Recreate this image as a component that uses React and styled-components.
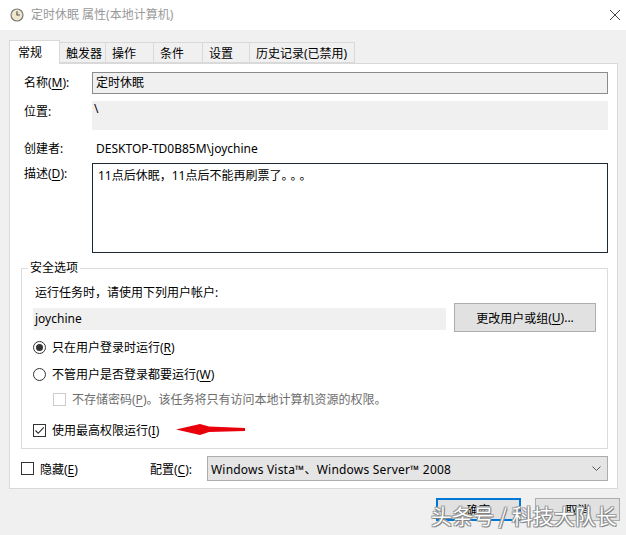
import React from "react";
import styled, { createGlobalStyle } from "styled-components";

const GlobalStyle = createGlobalStyle`
  html, body {
    margin: 0;
    padding: 0;
    background: #f0f0f0;
  }
  body {
    font-family: "Noto Sans", "Noto Sans CJK SC", sans-serif;
    font-size: 12px;
    color: #000;
  }
  * {
    box-sizing: border-box;
  }
`;

const Window = styled.div`
  position: relative;
  width: 626px;
  height: 535px;
  background: #f0f0f0;
  overflow: hidden;
`;

const TitleBar = styled.div`
  display: flex;
  align-items: center;
  height: 30px;
  padding-left: 10px;
  background: #fff;
  .title {
    margin-left: 7px;
    color: #999;
    line-height: 16px;
  }
  .close {
    margin-left: auto;
    margin-right: 5px;
  }
`;

const TabRow = styled.div`
  display: flex;
  align-items: flex-end;
  height: 23px;
  margin-top: 10px;
  padding-left: 9px;
`;

const Tab = styled.div`
  position: relative;
  z-index: ${(p) => (p.$active ? 2 : 1)};
  display: flex;
  align-items: center;
  width: ${(p) => p.$w}px;
  height: ${(p) => (p.$active ? 24 : 21)}px;
  margin-left: ${(p) => (p.$first ? 0 : -1)}px;
  margin-bottom: ${(p) => (p.$active ? -1 : 0)}px;
  padding-left: ${(p) => (p.$active ? 8 : 6)}px;
  padding-bottom: ${(p) => (p.$active ? 2 : 0)}px;
  border: 1px solid #d9d9d9;
  border-bottom: ${(p) => (p.$active ? "none" : "1px solid #d9d9d9")};
  background: ${(p) => (p.$active ? "#fff" : "#f0f0f0")};
  white-space: nowrap;
`;

const Panel = styled.div`
  margin: 0 8px 0 9px;
  padding: 0 9px 7px 11px;
  background: #fff;
  border: 1px solid #d9d9d9;
`;

const FieldRow = styled.div`
  display: flex;
  align-items: flex-start;
  margin-top: ${(p) => p.$mt}px;
`;

const Label = styled.div`
  flex: none;
  width: 71px;
  padding-left: 3px;
  line-height: 22px;
  white-space: nowrap;
  u {
    text-decoration: underline;
    text-underline-offset: 2px;
  }
`;

const ReadField = styled.div`
  flex: 1;
  height: 22px;
  padding: 0 3px;
  line-height: 20px;
  background: #f0f0f0;
  border: 1px solid #8c8c8c;
`;

const PathBox = styled.div`
  flex: 1;
  height: 29px;
  padding: 0 2px;
  line-height: 16px;
  background: #f0f0f0;
`;

const PlainValue = styled.div`
  flex: 1;
  line-height: 22px;
  padding-left: 4px;
`;

const DescBox = styled.div`
  flex: 1;
  height: 90px;
  padding: 4px 5px;
  line-height: 16px;
  background: #fff;
  border: 1px solid #1b2a36;
  .dots {
    letter-spacing: 3px;
  }
`;

const GroupBox = styled.div`
  position: relative;
  margin-top: 15px;
  padding: 0 0 9px 11px;
  border: 1px solid #dcdcdc;
`;

const GroupTitle = styled.div`
  position: absolute;
  top: -9px;
  left: 6px;
  padding: 0 2px;
  line-height: 16px;
  background: #fff;
`;

const Intro = styled.div`
  margin-top: 15px;
  padding-left: 2px;
  line-height: 18px;
`;

const AccountRow = styled.div`
  display: flex;
  align-items: flex-start;
  gap: 8px;
  margin-top: 1px;
`;

const AccountField = styled.div`
  width: 413px;
  height: 22px;
  margin-top: 5px;
  padding-left: 2px;
  line-height: 21px;
  background: #f0f0f0;
`;

const Button = styled.div`
  display: flex;
  align-items: center;
  justify-content: center;
  width: ${(p) => p.$w}px;
  height: ${(p) => p.$h}px;
  background: #e1e1e1;
  border: ${(p) => (p.$default ? "2px solid #0078d7" : "1px solid #adadad")};
  white-space: nowrap;
  u {
    text-underline-offset: 2px;
  }
`;

const OptionRow = styled.div`
  position: relative;
  display: flex;
  align-items: center;
  gap: 6px;
  height: 18px;
  margin-top: ${(p) => p.$mt}px;
  padding-left: ${(p) => p.$indent || 0}px;
  color: ${(p) => (p.$disabled ? "#6d6d6d" : "#000")};
  white-space: nowrap;
  u {
    text-underline-offset: 2px;
  }
`;

const Radio = styled.span`
  position: relative;
  flex: none;
  width: 13px;
  height: 13px;
  border: 1px solid #333;
  border-radius: 50%;
  background: #fff;
  &::after {
    content: "";
    display: ${(p) => (p.$checked ? "block" : "none")};
    position: absolute;
    left: 2px;
    top: 2px;
    width: 7px;
    height: 7px;
    border-radius: 50%;
    background: #333;
  }
`;

const Box = styled.span`
  display: flex;
  align-items: center;
  justify-content: center;
  flex: none;
  width: 13px;
  height: 13px;
  border: 1px solid ${(p) => (p.$disabled ? "#cccccc" : "#333")};
  background: #fff;
`;

const Arrow = styled.svg`
  position: absolute;
  left: 143px;
  top: 2px;
`;

const BottomRow = styled.div`
  display: flex;
  align-items: center;
  height: 25px;
  margin-top: 7px;
  .hide {
    display: flex;
    align-items: center;
    gap: 6px;
    width: 129px;
  }
  .cfg {
    width: 57px;
    white-space: nowrap;
  }
  u {
    text-underline-offset: 2px;
  }
`;

const Select = styled.div`
  flex: 1;
  display: flex;
  align-items: center;
  height: 25px;
  padding: 0 6px 0 3px;
  background: #e5e5e5;
  border: 1px solid #adadad;
  white-space: nowrap;
  span {
    letter-spacing: 0.2px;
  }
  svg {
    margin-left: auto;
  }
`;

const Footer = styled.div`
  display: flex;
  justify-content: flex-end;
  gap: 14px;
  margin-top: 9px;
  padding-right: 6px;
`;

const Watermark = styled.div`
  position: absolute;
  left: 431px;
  top: 502px;
  font-family: "Noto Sans CJK SC", sans-serif;
  font-size: 21px;
  line-height: 26px;
  color: #fff;
  text-shadow: 0 0 1px #555, 1px 1px 0 #888, -1px -1px 0 #aaa, 1px -1px 0 #aaa,
    -1px 1px 0 #aaa;
  white-space: nowrap;
`;

const tabs = [
  { label: "常规", w: 51, active: true },
  { label: "触发器", w: 47 },
  { label: "操作", w: 49 },
  { label: "条件", w: 50 },
  { label: "设置", w: 48 },
  { label: "历史记录(已禁用)", w: 106 },
];

const Check = () => (
  <svg width="11" height="11" viewBox="0 0 11 11">
    <path d="M1.5 5.5 L4.2 8.3 L9.8 2.4" fill="none" stroke="#222" strokeWidth="1.1" />
  </svg>
);

export default function App() {
  return (
    <Window>
      <GlobalStyle />
      <TitleBar>
        <svg width="14" height="14" viewBox="0 0 14 14">
          <circle cx="7" cy="7" r="6" fill="#efe7cc" stroke="#7a7a7a" strokeWidth="1.2" />
          <path d="M7 3.2 V7 H10" fill="none" stroke="#555" strokeWidth="1.2" />
        </svg>
        <span className="title">定时休眠 属性(本地计算机)</span>
        <svg className="close" width="12" height="12" viewBox="0 0 12 12">
          <path d="M1 1 L11 11 M11 1 L1 11" stroke="#444" strokeWidth="1" />
        </svg>
      </TitleBar>

      <TabRow>
        {tabs.map((t, i) => (
          <Tab key={t.label} $w={t.w} $active={t.active} $first={i === 0}>
            {t.label}
          </Tab>
        ))}
      </TabRow>

      <Panel>
        <FieldRow $mt={8}>
          <Label>
            名称(<u>M</u>):
          </Label>
          <ReadField>定时休眠</ReadField>
        </FieldRow>
        <FieldRow $mt={7}>
          <Label>位置:</Label>
          <PathBox>\</PathBox>
        </FieldRow>
        <FieldRow $mt={8}>
          <Label>创建者:</Label>
          <PlainValue>DESKTOP-TD0B85M\joychine</PlainValue>
        </FieldRow>
        <FieldRow $mt={3}>
          <Label>
            描述(<u>D</u>):
          </Label>
          <DescBox>
            11点后休眠，11点后不能再刷票了<span className="dots">。。。</span>
          </DescBox>
        </FieldRow>

        <GroupBox>
          <GroupTitle>安全选项</GroupTitle>
          <Intro>运行任务时，请使用下列用户帐户:</Intro>
          <AccountRow>
            <AccountField>joychine</AccountField>
            <Button $w={142} $h={29}>
              更改用户或组(<u>U</u>)...
            </Button>
          </AccountRow>
          <OptionRow $mt={6}>
            <Radio $checked />
            <span>
              只在用户登录时运行(<u>R</u>)
            </span>
          </OptionRow>
          <OptionRow $mt={9}>
            <Radio />
            <span>
              不管用户是否登录都要运行(<u>W</u>)
            </span>
          </OptionRow>
          <OptionRow $mt={7} $indent={20} $disabled>
            <Box $disabled />
            <span>
              不存储密码(<u>P</u>)。该任务将只有访问本地计算机资源的权限。
            </span>
          </OptionRow>
          <OptionRow $mt={13}>
            <Box>
              <Check />
            </Box>
            <span>
              使用最高权限运行(<u>I</u>)
            </span>
            <Arrow width="70" height="13" viewBox="0 0 70 13">
              <path
                d="M0 6.5 L24 1 L33 3.5 L69 5 L69 8 L33 9 L24 12 Z"
                fill="#e8000b"
              />
            </Arrow>
          </OptionRow>
        </GroupBox>

        <BottomRow>
          <div className="hide">
            <Box />
            <span>
              隐藏(<u>E</u>)
            </span>
          </div>
          <span className="cfg">
            配置(<u>C</u>):
          </span>
          <Select>
            <span>Windows Vista™、Windows Server™ 2008</span>
            <svg width="9" height="5" viewBox="0 0 9 5">
              <path d="M0.5 0.5 L4.5 4.5 L8.5 0.5" fill="none" stroke="#555" strokeWidth="1" />
            </svg>
          </Select>
        </BottomRow>
      </Panel>

      <Footer>
        <Button $w={85} $h={23} $default>
          确定
        </Button>
        <Button $w={85} $h={23}>
          取消
        </Button>
      </Footer>

      <Watermark>头条号 / 科技大队长</Watermark>
    </Window>
  );
}
